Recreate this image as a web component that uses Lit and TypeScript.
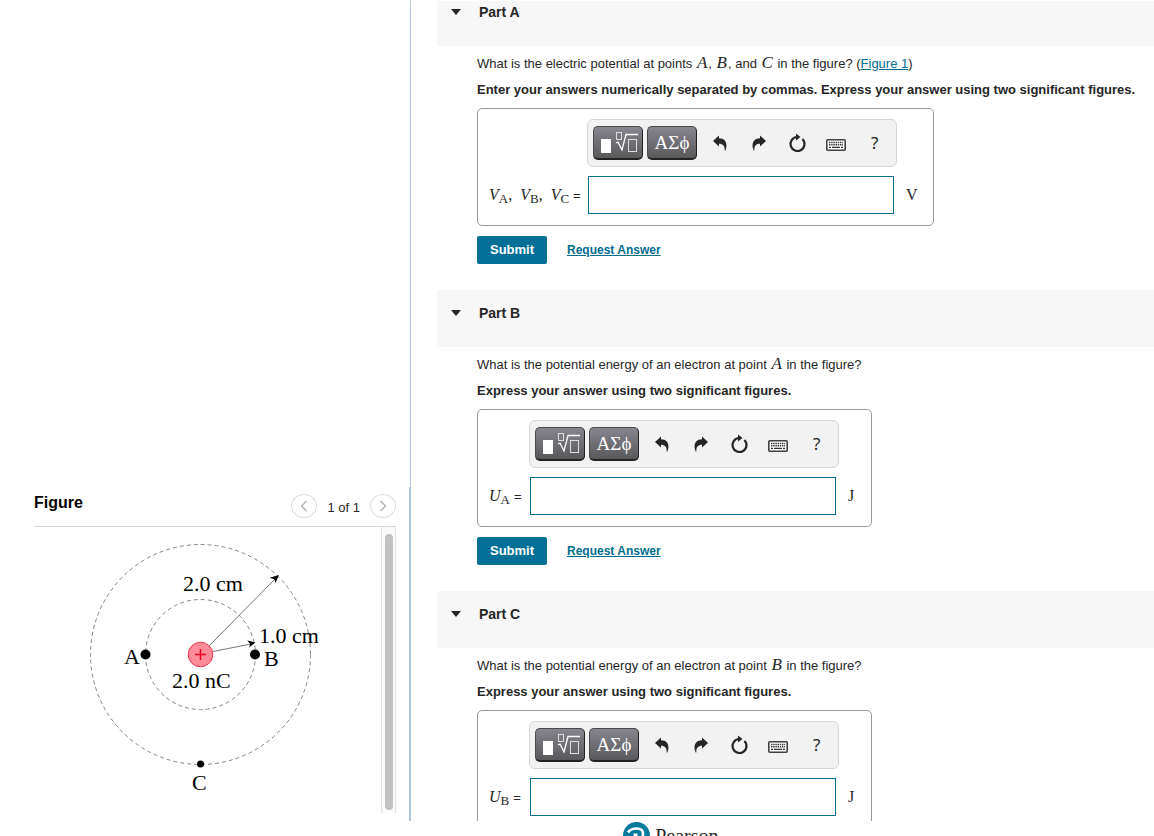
import { LitElement, html, css, svg, nothing, type TemplateResult } from "lit";
import { customElement, property } from "lit/decorators.js";
import { classMap } from "lit/directives/class-map.js";

interface Part {
  id: string;
  name: string;
  question: TemplateResult;
  instruction: string;
  label: TemplateResult;
  unit: string;
  wide?: boolean;
}

const v = (name: string) => html`<i>${name}</i>`;
const sub = (name: string, index: string) => html`<i>${name}</i><sub>${index}</sub>`;

const PARTS: Part[] = [
  {
    id: "a",
    name: "Part A",
    question: html`What is the electric potential at points ${v("A")}, ${v("B")}, and ${v("C")} in the figure? (<a href="#figure">Figure 1</a>)`,
    instruction: "Enter your answers numerically separated by commas. Express your answer using two significant figures.",
    label: html`${sub("V", "A")},&ensp;${sub("V", "B")},&ensp;${sub("V", "C")}`,
    unit: "V",
    wide: true,
  },
  {
    id: "b",
    name: "Part B",
    question: html`What is the potential energy of an electron at point ${v("A")} in the figure?`,
    instruction: "Express your answer using two significant figures.",
    label: sub("U", "A"),
    unit: "J",
  },
  {
    id: "c",
    name: "Part C",
    question: html`What is the potential energy of an electron at point ${v("B")} in the figure?`,
    instruction: "Express your answer using two significant figures.",
    label: sub("U", "B"),
    unit: "J",
  },
];

@customElement("math-toolbar")
class MathToolbar extends LitElement {
  static styles = css`
    :host {
      display: flex;
      align-items: center;
      box-sizing: border-box;
      height: 48px;
      padding: 0 2px 0 5px;
      background: #f2f2f2;
      border: 1px solid #d6d6d6;
      border-radius: 6px;
    }
    button {
      font: inherit;
      color: #262626;
      padding: 0;
      border: 0;
      background: none;
    }
    svg { display: block; }
    .key {
      display: grid;
      place-items: center;
      box-sizing: border-box;
      width: 50px;
      height: 34px;
      margin-right: 4px;
      color: #fff;
      background: linear-gradient(#87858e, #59595b);
      border: 1px solid #4a4a4c;
      border-right-color: #222;
      border-bottom: 2px solid #222;
      border-radius: 5px;
    }
    .greek { font: 19px/24px "Liberation Serif", "DejaVu Serif", serif; }
    .tool {
      display: grid;
      place-items: center;
      flex: 1;
      height: 34px;
    }
    .help { font: 17px/20px "Noto Sans", "Open Sans", sans-serif; }
  `;

  render() {
    return html`
      <button class="key" aria-label="Templates">
        <svg width="40" height="26" viewBox="0 0 40 26" fill="none" stroke="#fff">
          <rect x="3" y="9" width="10" height="14" fill="#fff" stroke="none" />
          <rect x="18.500" y="2.500" width="5" height="7" stroke="#ddd" />
          <path d="M18 13l2-1 4 8 4-15.500h12" stroke-width="1.300" />
          <rect x="30.500" y="9.500" width="8" height="12" stroke="#ddd" />
        </svg>
      </button>
      <button class="key greek" aria-label="Symbols">ΑΣϕ</button>
      <button class="tool" aria-label="Undo">
        <svg width="14" height="16" viewBox="0 0 14 16">
          <path d="M0 6L6 .5V3.200C11 3.200 14 6.500 13.400 12L12.400 15.500H11.600C12 11 10 8.800 6 8.800V11.500z" fill="#262626" />
        </svg>
      </button>
      <button class="tool" aria-label="Redo">
        <svg width="14" height="16" viewBox="0 0 14 16">
          <path d="M14 6L8 .5V3.200C3 3.200 0 6.500 .6 12L1.600 15.500H2.400C2 11 4 8.800 8 8.800V11.500z" fill="#262626" />
        </svg>
      </button>
      <button class="tool" aria-label="Reset">
        <svg width="18" height="20" viewBox="0 0 18 20">
          <path d="M14.400 6A7 7 0 1 1 9 4" fill="none" stroke="#262626" stroke-width="2.200" />
          <path d="M8 .6L12.500 4 8 7.400z" fill="#262626" />
        </svg>
      </button>
      <button class="tool" aria-label="Keyboard">
        <svg width="20" height="18" viewBox="0 0 20 18">
          <rect x=".8" y="5.800" width="18.400" height="10.400" rx="1" fill="#fff" stroke="#404040" stroke-width="1.600" />
          <path d="M3 8.500h14M3 10.800h14" stroke="#303030" stroke-width="1.400" stroke-dasharray="1.400 .8" />
          <path d="M3 13.400h2M6 13.400h8M15 13.400h2" stroke="#303030" stroke-width="1.400" />
        </svg>
      </button>
      <button class="tool help" aria-label="Help">?</button>
    `;
  }
}

@customElement("answer-part")
class AnswerPart extends LitElement {
  @property({ attribute: false }) part!: Part;

  static styles = css`
    :host { display: block; color: #262626; font: 13px/18px "Liberation Sans", Arial, sans-serif; }
    a { color: #006d8f; }
    .head {
      display: flex;
      align-items: flex-start;
      box-sizing: border-box;
      width: 100%;
      height: 57px;
      padding: 14px 0 0 14px;
      font: bold 14px/18px "Liberation Sans", Arial, sans-serif;
      color: #262626;
      text-align: left;
      border: 0;
      background: #f7f7f7;
    }
    .arrow { margin: 6px 18px 0 0; }
    .body { padding: 9px 0 26px 40px; }
    p { margin: 0 0 8px; line-height: 18px; white-space: nowrap; }
    .instruction { font-weight: bold; margin-bottom: 9px; }
    i, sub { font-family: "Liberation Serif", "Times New Roman", serif; }
    p i { margin: 0 1px; font-size: 17px; line-height: 16px; }
    .box {
      display: inline-grid;
      grid-template-columns: 40px 310px 32px;
      align-items: center;
      row-gap: 9px;
      box-sizing: border-box;
      height: 118px;
      padding: 10px 0 11px 11px;
      vertical-align: top;
      border: 1px solid #999;
      border-radius: 5px;
    }
    .box.wide { grid-template-columns: 98px 310px 36px; }
    math-toolbar { grid-column: 2; }
    label { grid-column: 1; white-space: nowrap; font: 16px/24px "Liberation Serif", serif; }
    label sub { font-size: 13px; line-height: 12px; vertical-align: -3px; }
    .eq { font: 13px/18px "Liberation Sans", Arial, sans-serif; }
    input {
      box-sizing: border-box;
      width: 306px;
      height: 38px;
      margin: 0 0 0 1px;
      padding: 0 6px;
      font: 16px "Liberation Sans", Arial, sans-serif;
      background: #fff;
      border: 1px solid #006d8f;
      border-radius: 0;
    }
    .unit { padding-left: 9px; font: 16px/24px "Liberation Serif", serif; }
    .actions { display: flex; align-items: center; gap: 20px; margin-top: 10px; }
    .submit {
      width: 70px;
      height: 28px;
      padding: 0;
      font: bold 13px/18px "Liberation Sans", Arial, sans-serif;
      color: #fff;
      background: #047097;
      border: 0;
      border-radius: 2px;
    }
    .request { font-size: 12px; font-weight: bold; }
  `;

  render() {
    const p = this.part;
    if (!p) return nothing;
    return html`
      <button class="head" aria-expanded="true">
        <svg class="arrow" width="10" height="6" viewBox="0 0 10 6"><path d="M0 0h10L5 6z" fill="#262626" /></svg>
        ${p.name}
      </button>
      <div class="body">
        <p>${p.question}</p>
        <p class="instruction">${p.instruction}</p>
        <div class=${classMap({ box: true, wide: !!p.wide })}>
          <math-toolbar></math-toolbar>
          <label for=${p.id}>${p.label} <span class="eq">=</span></label>
          <input id=${p.id} type="text" />
          <span class="unit">${p.unit}</span>
        </div>
        <div class="actions">
          <button class="submit">Submit</button>
          <a class="request" href="#request">Request Answer</a>
        </div>
      </div>
    `;
  }
}

@customElement("figure-panel")
class FigurePanel extends LitElement {
  static styles = css`
    :host {
      display: block;
      box-sizing: border-box;
      padding: 0 13px 8px 34px;
      font: 13px/18px "Liberation Sans", Arial, sans-serif;
      border-right: 1px solid #b0c5d9;
    }
    .head {
      display: flex;
      align-items: center;
      box-sizing: border-box;
      height: 40px;
      padding-bottom: 2px;
      border-bottom: 1px solid #d6d6d6;
    }
    h2 { flex: 1; margin: 0 0 5px; font-size: 16px; line-height: 20px; color: #000; }
    .count { padding: 4px 10px 0; color: #262626; }
    .page {
      display: grid;
      place-items: center;
      width: 26px;
      height: 24px;
      padding: 0;
      background: #fff;
      border: 1px solid #ddd;
      border-radius: 50%;
    }
    .view { display: flex; height: 286px; }
    .drawing { flex: 1; min-width: 0; }
    .drawing svg { display: block; }
    .drawing text { font: 22px "Liberation Serif", "Times New Roman", serif; fill: #000; }
    .track {
      box-sizing: border-box;
      width: 15px;
      padding: 7px 0 3px;
      background: #fafafa;
      border: solid #e3e3e3;
      border-width: 0 1px;
    }
    .thumb { width: 8px; height: 100%; margin: 0 auto; background: #c1c1c1; border-radius: 4px; }
  `;

  render() {
    const ring = (r: number) =>
      svg`<circle cx="166.500" cy="127.500" r=${r} fill="none" stroke="#777" stroke-width=".9" stroke-dasharray="4 3" />`;
    return html`
      <div class="head">
        <h2>Figure</h2>
        <button class="page" aria-label="Previous">
          <svg width="8" height="12" viewBox="0 0 8 12"><path d="M6.500 1L1.500 6l5 5" fill="none" stroke="#b5b5b5" stroke-width="1.500" /></svg>
        </button>
        <span class="count">1 of 1</span>
        <button class="page" aria-label="Next">
          <svg width="8" height="12" viewBox="0 0 8 12"><path d="M1.500 1l5 5-5 5" fill="none" stroke="#b5b5b5" stroke-width="1.500" /></svg>
        </button>
      </div>
      <div class="view">
        <div class="drawing" id="figure">
          <svg width="347" height="286" viewBox="0 0 347 286">
            ${ring(110)} ${ring(55)}
            <path d="M175 119L242 51M179 124.500L217 117" stroke="#666" stroke-width=".9" />
            <path d="M245 48l-3.500 8-.9-3.400-5-1.800zM221.500 115.500l-6.500 5 1.200-3.500-3-3.500z" fill="#000" />
            <circle cx="166.500" cy="127.500" r="12.300" fill="#ff8c98" stroke="#f0364a" />
            <path d="M161 127.500h11M166.500 122v11" stroke="#e8001c" stroke-width="1.500" />
            <circle cx="111.500" cy="127.500" r="5" />
            <circle cx="221" cy="127.500" r="5" />
            <circle cx="166.500" cy="237" r="3.500" />
            <text x="149" y="64">2.0 cm</text>
            <text x="225" y="116">1.0 cm</text>
            <text x="138" y="161">2.0 nC</text>
            <text x="90" y="137">A</text>
            <text x="230" y="139">B</text>
            <text x="158" y="263">C</text>
          </svg>
        </div>
        <div class="track"><div class="thumb"></div></div>
      </div>
    `;
  }
}

@customElement("app-root")
class AppRoot extends LitElement {
  static styles = css`
    :host { display: flex; flex-direction: column; height: 100vh; overflow: hidden; background: #fff; }
    main { display: flex; flex: 1; min-height: 0; }
    .left { display: flex; flex-direction: column; justify-content: flex-end; width: 410px; flex: none; }
    .right {
      flex: 1;
      min-width: 0;
      overflow: hidden;
      padding-left: 26px;
      border-left: 1px solid #b0c5d9;
      border-top: 1px solid #fff;
    }
    .parts { margin-top: -12px; }
    footer {
      display: flex;
      align-items: flex-start;
      gap: 5px;
      height: 15px;
      padding-left: 54%;
      overflow: hidden;
    }
    footer svg { flex: none; margin-top: 1px; }
    .brand { padding-top: 3px; font: 20px/24px "Liberation Serif", serif; color: #262626; }
  `;

  render() {
    return html`
      <main>
        <section class="left"><figure-panel></figure-panel></section>
        <section class="right">
          <div class="parts">${PARTS.map((p) => html`<answer-part .part=${p}></answer-part>`)}</div>
        </section>
      </main>
      <footer>
        <svg width="27" height="27" viewBox="0 0 27 27">
          <circle cx="13.500" cy="13.500" r="13.500" fill="#047a9c" />
          <path d="M5 10.500C8 5.500 20 4.500 20 11.500c.2 4-3 6-6.500 6" fill="none" stroke="#fff" stroke-width="2.600" />
          <path d="M10.500 11.500h4v11h-4z" fill="#fff" />
        </svg>
        <span class="brand">Pearson</span>
      </footer>
    `;
  }
}
